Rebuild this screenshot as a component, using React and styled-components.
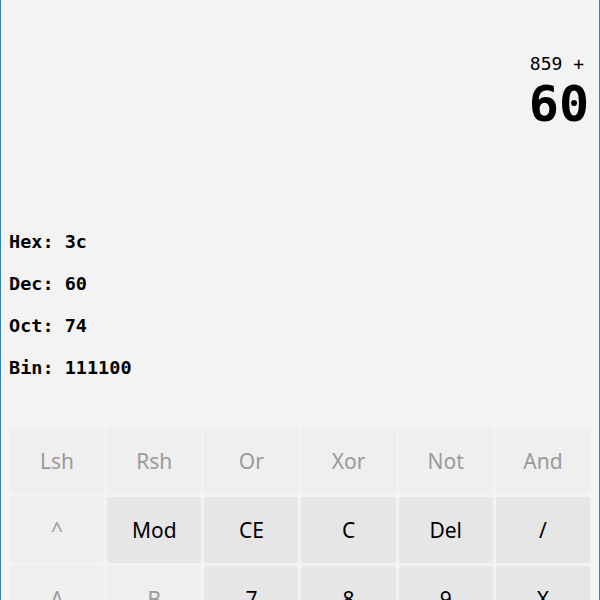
import React from 'react';
import styled, { createGlobalStyle } from 'styled-components';

const Global = createGlobalStyle`
  html, body {
    margin: 0;
    padding: 0;
    background: #f3f3f3;
  }
`;

const Window = styled.div`
  box-sizing: border-box;
  width: 600px;
  height: 600px;
  overflow: hidden;
  background: #f3f3f3;
  border-left: 1px solid #2f7fbf;
  border-right: 1px solid #2f7fbf;
  display: flex;
  flex-direction: column;
`;

const Display = styled.div`
  padding: 52px 10px 0 0;
  text-align: right;
  font-family: "DejaVu Sans Mono", "Liberation Mono", monospace;
  color: #000;
`;

const Expression = styled.div`
  font-size: 18px;
  line-height: 24px;
  padding-right: 5px;
`;

const Result = styled.div`
  font-size: 50px;
  font-weight: bold;
  line-height: 56px;
`;

const Bases = styled.div`
  margin-top: 89px;
  padding-left: 8px;
  font-family: "DejaVu Sans Mono", "Liberation Mono", monospace;
  font-weight: bold;
  font-size: 18.5px;
`;

const BaseRow = styled.div`
  line-height: 42px;
`;

const Keypad = styled.div`
  margin-top: 39px;
  padding: 0 9px;
  display: grid;
  grid-template-columns: repeat(6, 1fr);
  grid-auto-rows: 66px;
  gap: 3px;
`;

const Key = styled.button`
  border: none;
  border-radius: 2px;
  margin: 0;
  padding: 0;
  font-family: "Noto Sans", "Open Sans", sans-serif;
  font-size: 21px;
  background: ${p => (p.$off ? '#efefef' : '#e6e6e6')};
  color: ${p => (p.$off ? '#9a9a9a' : '#000')};
`;

const keys = [
  ['Lsh', 1], ['Rsh', 1], ['Or', 1], ['Xor', 1], ['Not', 1], ['And', 1],
  ['^', 1], ['Mod', 0], ['CE', 0], ['C', 0], ['Del', 0], ['/', 0],
  ['A', 1], ['B', 1], ['7', 0], ['8', 0], ['9', 0], ['X', 0],
];

const value = 60;

export default function App() {
  return (
    <Window>
      <Global />
      <Display>
        <Expression>859 +</Expression>
        <Result>{value}</Result>
      </Display>
      <Bases>
        <BaseRow>Hex: {value.toString(16)}</BaseRow>
        <BaseRow>Dec: {value}</BaseRow>
        <BaseRow>Oct: {value.toString(8)}</BaseRow>
        <BaseRow>Bin: {value.toString(2)}</BaseRow>
      </Bases>
      <Keypad>
        {keys.map(([label, off], i) => (
          <Key key={i} $off={off}>{label}</Key>
        ))}
      </Keypad>
    </Window>
  );
}
